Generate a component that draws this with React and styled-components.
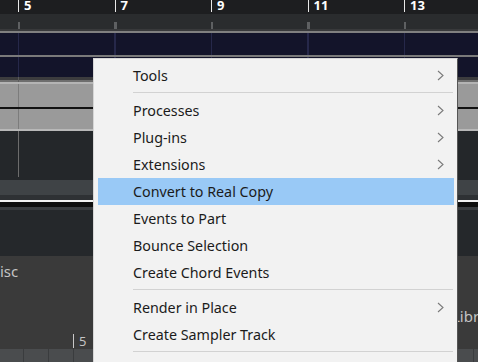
import styled, { createGlobalStyle } from 'styled-components';

const GlobalStyle = createGlobalStyle`
  html, body {
    margin: 0;
    padding: 0;
    background: #25282b;
    overflow: hidden;
  }
  body {
    font-family: "Segoe UI", "Noto Sans", "Liberation Sans", sans-serif;
  }
`;

const BARS = ['5', '7', '9', '11', '13'];
const STEP = 96.5;

const Stage = styled.div`
  position: relative;
  width: 478px;
  height: 362px;
  overflow: hidden;
  display: flex;
  flex-direction: column;
`;

const Band = styled.div`
  height: ${(p) => p.h}px;
  flex-shrink: 0;
  background-color: ${(p) => p.bg};
  background-image: ${(p) =>
    p.grid ? `repeating-linear-gradient(to right, ${p.grid} 0 1px, transparent 1px ${STEP}px)` : 'none'};
  background-position: 18px 0;
`;

const Ruler = styled.div`
  height: 14px;
  flex-shrink: 0;
  background: #1d1e20;
  display: flex;
  padding-left: 18px;
  overflow: hidden;
`;

const BarMark = styled.div`
  width: ${STEP}px;
  flex-shrink: 0;
  height: 12px;
  border-left: 1px solid #e8e8e8;
  box-sizing: border-box;
  padding-left: 5px;
  color: #ffffff;
  font: bold 13px "Noto Sans", sans-serif;
  line-height: 10px;
`;

const TickBand = styled.div`
  height: 15px;
  flex-shrink: 0;
  background-color: #2a2c2e;
  background-image: repeating-linear-gradient(to right, #5e6062 0 2px, transparent 2px ${STEP}px);
  background-position: 18px 8px;
  background-size: 100% 7px;
  background-repeat: no-repeat;
`;

const Lane = styled.div`
  height: 45px;
  flex-shrink: 0;
  background-color: #9a9a9a;
  background-image: repeating-linear-gradient(to right, #7c7c7c 0 1px, transparent 1px ${STEP}px);
  background-position: 18px 0;
  display: flex;
  flex-direction: column;
`;

const LaneLine = styled.div`
  margin-top: 23px;
  height: 2px;
  background: #111;
`;

const DarkLane = styled.div`
  height: 49px;
  flex-shrink: 0;
  background-color: #24272a;
  background-image: linear-gradient(#6c6c6c, #6c6c6c);
  background-size: 1px 46px;
  background-position: 18px 0;
  background-repeat: no-repeat;
`;

const Panel = styled.div`
  height: 93px;
  flex-shrink: 0;
  background: #3a3a3a;
  display: flex;
  flex-direction: column;
  color: #c4c4c4;
  font: 15px "Noto Sans", sans-serif;
`;

const PanelText = styled.div`
  height: 18px;
  margin-top: ${(p) => p.top}px;
  padding-left: ${(p) => p.left}px;
  white-space: nowrap;
  line-height: 18px;
`;

const PanelMark = styled.div`
  margin-top: auto;
  margin-left: 73px;
  margin-bottom: 1px;
  height: 14px;
  border-left: 1px solid #c8c8c8;
  padding-left: 5px;
  font-size: 13px;
  line-height: 14px;
  color: #c4c4c4;
`;

const Footer = styled.div`
  height: 13px;
  flex-shrink: 0;
  background: #4a4c4e;
  display: flex;
`;

const FooterCell = styled.div`
  width: 25px;
  flex-shrink: 0;
  border-right: 1px solid #3a3c3e;
  box-sizing: border-box;
  &:first-child { width: 24px; }
`;

const Menu = styled.div`
  position: absolute;
  left: 93px;
  top: 58px;
  width: 365px;
  height: 320px;
  box-sizing: border-box;
  background: #f2f2f2;
  border-left: 1px solid #d6d6d6;
  border-top: 1px solid #d6d6d6;
  border-right: 1px solid #555;
  padding-top: 3px;
  display: flex;
  flex-direction: column;
`;

const Item = styled.div`
  height: 27px;
  flex-shrink: 0;
  margin: 0 3px 0 4px;
  padding: 0 10px 0 35px;
  display: flex;
  align-items: center;
  justify-content: space-between;
  background: ${(p) => (p.$active ? '#99c9f6' : 'transparent')};
  color: #1b1b1b;
  font-size: 14.3px;
`;

const Separator = styled.div`
  height: 1px;
  flex-shrink: 0;
  margin: 3px 4px 4px 39px;
  background: #d2d2d2;
`;

const Chevron = () => (
  <svg width="7" height="11" viewBox="0 0 7 11">
    <polyline points="1,1 6,5.5 1,10" fill="none" stroke="#7a7a7a" strokeWidth="1.1" />
  </svg>
);

const MENU = [
  { label: 'Tools', sub: true },
  '-',
  { label: 'Processes', sub: true },
  { label: 'Plug-ins', sub: true },
  { label: 'Extensions', sub: true },
  { label: 'Convert to Real Copy', active: true },
  { label: 'Events to Part' },
  { label: 'Bounce Selection' },
  { label: 'Create Chord Events' },
  '-',
  { label: 'Render in Place', sub: true },
  { label: 'Create Sampler Track' },
  '-',
];

export default function App() {
  return (
    <>
      <GlobalStyle />
      <Stage>
        <Ruler>
          {BARS.map((b) => (
            <BarMark key={b}>{b}</BarMark>
          ))}
        </Ruler>
        <TickBand />
        <Band h={2} bg="#38393b" />
        <Band h={2} bg="#808080" />
        <Band h={22} bg="#13142a" grid="#26284a" />
        <Band h={2} bg="#7a7a7a" />
        <Band h={20} bg="#13142a" grid="#26284a" />
        <Band h={3} bg="#3c3c3e" grid="#5a5a5a" />
        <Band h={2} bg="#6e6e6e" grid="#5a5a5a" />
        <Band h={2} bg="#b4b4b4" />
        <Lane>
          <LaneLine />
        </Lane>
        <Band h={2} bg="#b8b8b8" />
        <DarkLane />
        <Band h={15} bg="#3f4346" />
        <Band h={5} bg="#2e3134" />
        <Band h={2} bg="#f2f2f2" />
        <Band h={5} bg="#0e0e0e" />
        <Band h={3} bg="#3a3d40" />
        <Band h={46} bg="#25282b" />
        <Panel>
          <PanelText top={6} left={0}>isc</PanelText>
          <PanelText top={27} left={452}>Library</PanelText>
          <PanelMark>5</PanelMark>
        </Panel>
        <Footer>
          {Array.from({ length: 19 }).map((_, i) => (
            <FooterCell key={i} />
          ))}
        </Footer>

        <Menu>
          {MENU.map((m, i) =>
            m === '-' ? (
              <Separator key={i} />
            ) : (
              <Item key={i} $active={m.active}>
                <span>{m.label}</span>
                {m.sub && <Chevron />}
              </Item>
            )
          )}
        </Menu>
      </Stage>
    </>
  );
}
